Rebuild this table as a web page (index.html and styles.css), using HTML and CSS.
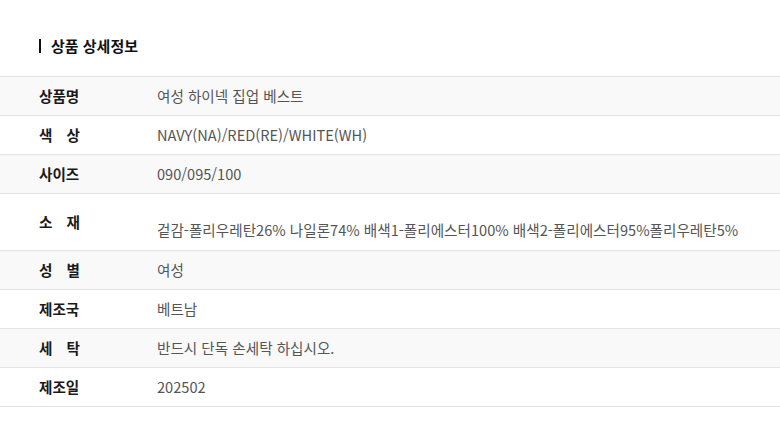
FILE: index.html
```html
<!DOCTYPE html>
<html lang="ko">
<head>
<meta charset="utf-8">
<link rel="stylesheet" href="styles.css">
</head>
<body>
<section class="spec">
  <h2 class="spec-title">상품 상세정보</h2>
  <div class="spec-table">
    <div class="row alt"><div class="label">상품명</div><div class="value">여성 하이넥 집업 베스트</div></div>
    <div class="row"><div class="label spaced"><span>색</span><span>상</span></div><div class="value">NAVY(NA)/RED(RE)/WHITE(WH)</div></div>
    <div class="row alt"><div class="label">사이즈</div><div class="value">090/095/100</div></div>
    <div class="row tall"><div class="label spaced"><span>소</span><span>재</span></div><div class="value low">겉감-폴리우레탄26% 나일론74% 배색1-폴리에스터100% 배색2-폴리에스터95%폴리우레탄5%</div></div>
    <div class="row alt"><div class="label spaced"><span>성</span><span>별</span></div><div class="value">여성</div></div>
    <div class="row"><div class="label">제조국</div><div class="value">베트남</div></div>
    <div class="row alt"><div class="label spaced"><span>세</span><span>탁</span></div><div class="value">반드시 단독 손세탁 하십시오.</div></div>
    <div class="row"><div class="label">제조일</div><div class="value">202502</div></div>
  </div>
</section>
</body>
</html>
```
FILE: styles.css
```css
html, body {
  margin: 0;
  padding: 0;
  background: #fff;
}
body {
  font-family: "Noto Sans CJK KR", "Noto Sans", sans-serif;
  color: #222;
}
.spec {
  padding-top: 35px;
}
.spec-title {
  margin: 0 0 19px 0;
  padding-left: 39px;
  display: flex;
  align-items: center;
  gap: 10px;
  font-size: 15px;
  line-height: 22px;
  font-weight: 700;
  color: #111;
}
.spec-title::before {
  content: "";
  display: block;
  width: 2px;
  height: 14px;
  background: #111;
}
.spec-table {
  border-top: 1px solid #e3e3e3;
}
.row {
  display: grid;
  grid-template-columns: 118px 1fr;
  padding-left: 39px;
  height: 38px;
  border-bottom: 1px solid #e3e3e3;
  align-items: center;
  font-size: 14.6px;
  line-height: 20px;
}
.row.alt {
  background: #f9f9f9;
}
.row.tall {
  height: 56px;
}
.label {
  font-weight: 700;
  color: #1a1a1a;
}
.label.spaced {
  display: flex;
  justify-content: space-between;
  width: 41px;
}
.value {
  color: #555;
}
.value.low {
  padding-top: 16px;
}
```
